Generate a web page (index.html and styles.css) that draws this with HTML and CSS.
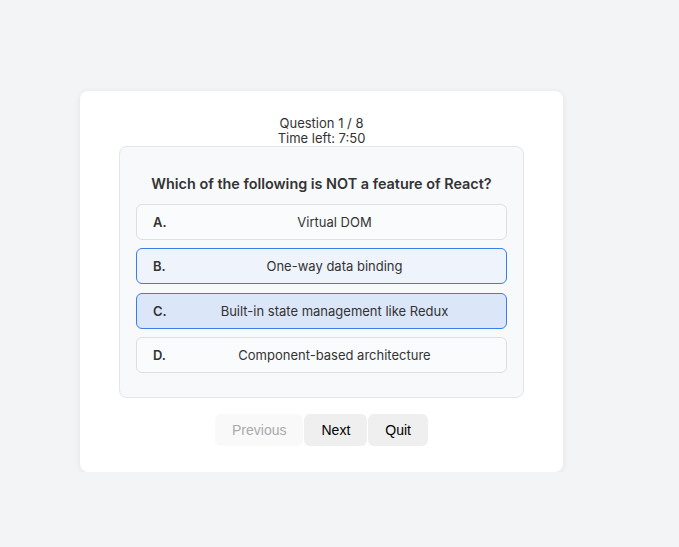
FILE: index.html
```html
<!DOCTYPE html>
<html>
<head>
<meta charset="utf-8">
<link rel="stylesheet" href="styles.css">
</head>
<body>
<div class="page">
  <div class="card">
    <div class="meta">
      <div>Question 1 / 8</div>
      <div>Time left: 7:50</div>
    </div>
    <div class="qbox">
      <h2 class="qtitle">Which of the following is NOT a feature of React?</h2>
      <div class="options">
        <div class="option"><span class="lbl">A.</span><span class="txt">Virtual DOM</span></div>
        <div class="option hover"><span class="lbl">B.</span><span class="txt">One-way data binding</span></div>
        <div class="option selected"><span class="lbl">C.</span><span class="txt">Built-in state management like Redux</span></div>
        <div class="option"><span class="lbl">D.</span><span class="txt">Component-based architecture</span></div>
      </div>
    </div>
    <div class="nav">
      <button class="btn disabled">Previous</button>
      <button class="btn">Next</button>
      <button class="btn">Quit</button>
    </div>
  </div>
</div>
</body>
</html>
```

FILE: styles.css
```css
html, body {
  margin: 0;
  padding: 0;
  background: #f3f4f6;
  font-family: Inter, "Liberation Sans", sans-serif;
  color: #374151;
}
.page {
  padding: 91px 0 0 80px;
}
.card {
  width: 483px;
  box-sizing: border-box;
  background: #fff;
  border-radius: 8px;
  box-shadow: 0 1px 6px rgba(0,0,0,0.08);
  padding: 25px 39px 26px;
}
.meta {
  text-align: center;
  font-size: 13px;
  line-height: 15px;
  color: #333;
}
.qbox {
  background: #f8f9fb;
  border: 1px solid #e3e5e9;
  border-radius: 8px;
  padding: 27px 16px 24px;
}
.qtitle {
  margin: 0 0 10px;
  text-align: center;
  font-size: 14.4px;
  line-height: 20px;
  font-weight: 600;
  color: #333;
}
.options {
  display: flex;
  flex-direction: column;
  gap: 8.33px;
}
.option {
  display: flex;
  align-items: center;
  height: 36px;
  box-sizing: border-box;
  border: 1px solid #dcdfe3;
  border-radius: 6px;
  background: #fafbfc;
  padding: 0 16px;
  font-size: 13px;
  color: #333;
}
.option.hover {
  background: #eef3fc;
  border-color: #3b7de9;
}
.option.selected {
  background: #dbe6f8;
  border-color: #3b7de9;
}
.lbl {
  width: 26px;
  font-weight: 600;
}
.txt {
  flex: 1;
  text-align: center;
}
.nav {
  display: flex;
  justify-content: center;
  gap: 1px;
  margin-top: 16px;
}
.btn {
  font-family: "Liberation Sans", Arial, sans-serif;
  font-size: 14px;
  height: 32px;
  border: none;
  border-radius: 6px;
  background: #efefef;
  color: #000;
  padding: 0 17px;
}
.btn.disabled {
  background: #f9f9f9;
  color: #aaa;
}
```
